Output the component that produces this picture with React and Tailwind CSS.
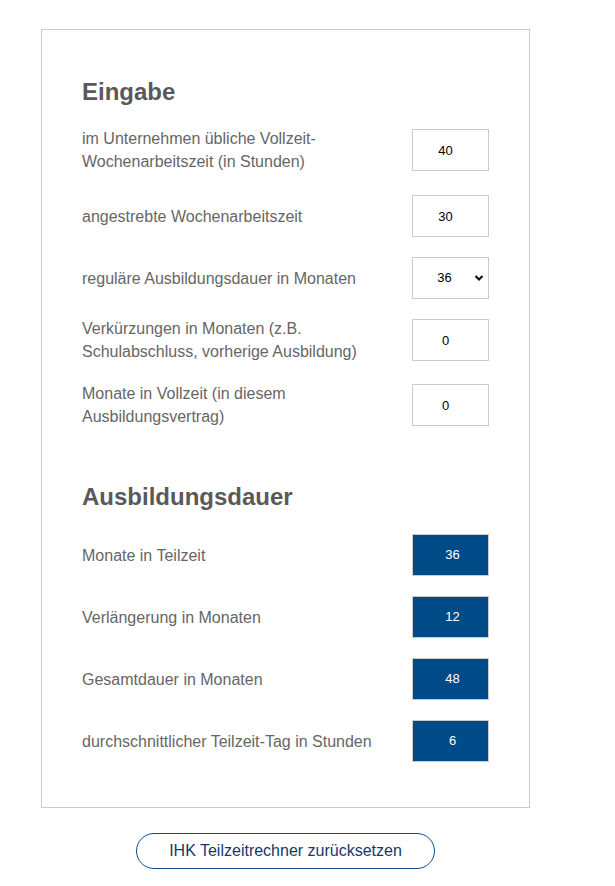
import React, { useState } from "react";

const font = { fontFamily: '"Liberation Sans", Arial, sans-serif' };

function Row({ label, children, className = "" }) {
  return (
    <div className={`flex items-center justify-between ${className}`}>
      <div className="w-[300px] text-[16px] leading-[23px] text-[#666666]">{label}</div>
      {children}
    </div>
  );
}

function NumberBox({ value, onChange }) {
  return (
    <input
      type="text"
      value={value}
      onChange={(e) => onChange(e.target.value)}
      className="w-[77px] h-[42px] border border-[#cccccc] bg-white text-center text-[13px] text-black pr-[10px] outline-none"
    />
  );
}

function ResultBox({ value }) {
  return (
    <div className="w-[77px] h-[42px] border border-[#cccccc] bg-[#004b87] flex items-center justify-center pl-[4px] text-[13px] text-white">
      {value}
    </div>
  );
}

export default function App() {
  const [vollzeit, setVollzeit] = useState("40");
  const [ziel, setZiel] = useState("30");
  const [dauer, setDauer] = useState("36");
  const [verk, setVerk] = useState("0");
  const [voll, setVoll] = useState("0");

  return (
    <div className="min-h-[886px] bg-white pt-[29px]" style={font}>
      {/* card */}
      <div className="ml-[41px] w-[489px] border border-[#cccccc] pl-[40px] pr-[40px] pt-[48px] pb-[45px]">
        <h2 className="text-[24px] leading-[28px] font-bold text-[#595959] mb-[21px]">Eingabe</h2>

        <div className="flex flex-col">
          <Row label="im Unternehmen übliche Vollzeit-Wochenarbeitszeit (in Stunden)" className="mb-[22px]">
            <NumberBox value={vollzeit} onChange={setVollzeit} />
          </Row>
          <Row label="angestrebte Wochenarbeitszeit" className="mb-[20px]">
            <NumberBox value={ziel} onChange={setZiel} />
          </Row>
          <Row label="reguläre Ausbildungsdauer in Monaten" className="mb-[18px]">
            <div className="relative w-[77px] h-[42px]">
              <select
                value={dauer}
                onChange={(e) => setDauer(e.target.value)}
                className="appearance-none w-full h-full border border-[#cccccc] bg-white text-center text-[13px] text-black pr-[12px] outline-none"
              >
                <option value="24">24</option>
                <option value="36">36</option>
                <option value="42">42</option>
              </select>
              <svg className="absolute right-[5px] top-[17px] pointer-events-none" width="10" height="8" viewBox="0 0 10 8">
                <path d="M1.5 2 L5 5.5 L8.5 2" fill="none" stroke="#111" strokeWidth="2.2" />
              </svg>
            </div>
          </Row>
          <Row label="Verkürzungen in Monaten (z.B. Schulabschluss, vorherige Ausbildung)" className="mb-[19px]">
            <NumberBox value={verk} onChange={setVerk} />
          </Row>
          <Row label="Monate in Vollzeit (in diesem Ausbildungsvertrag)">
            <NumberBox value={voll} onChange={setVoll} />
          </Row>
        </div>

        <h2 className="mt-[55px] text-[24px] leading-[28px] font-bold text-[#595959] mb-[23px]">Ausbildungsdauer</h2>

        <div className="flex flex-col gap-[20px]">
          <Row label="Monate in Teilzeit">
            <ResultBox value="36" />
          </Row>
          <Row label="Verlängerung in Monaten">
            <ResultBox value="12" />
          </Row>
          <Row label="Gesamtdauer in Monaten">
            <ResultBox value="48" />
          </Row>
          <Row label="durchschnittlicher Teilzeit-Tag in Stunden">
            <ResultBox value="6" />
          </Row>
        </div>
      </div>

      <div className="w-[489px] ml-[41px] flex justify-center mt-[25px]">
        <button className="w-[299px] h-[36px] rounded-full border-[1.5px] border-[#0b4a8b] bg-white text-[16px] text-[#16386b]">
          IHK Teilzeitrechner zurücksetzen
        </button>
      </div>
    </div>
  );
}
